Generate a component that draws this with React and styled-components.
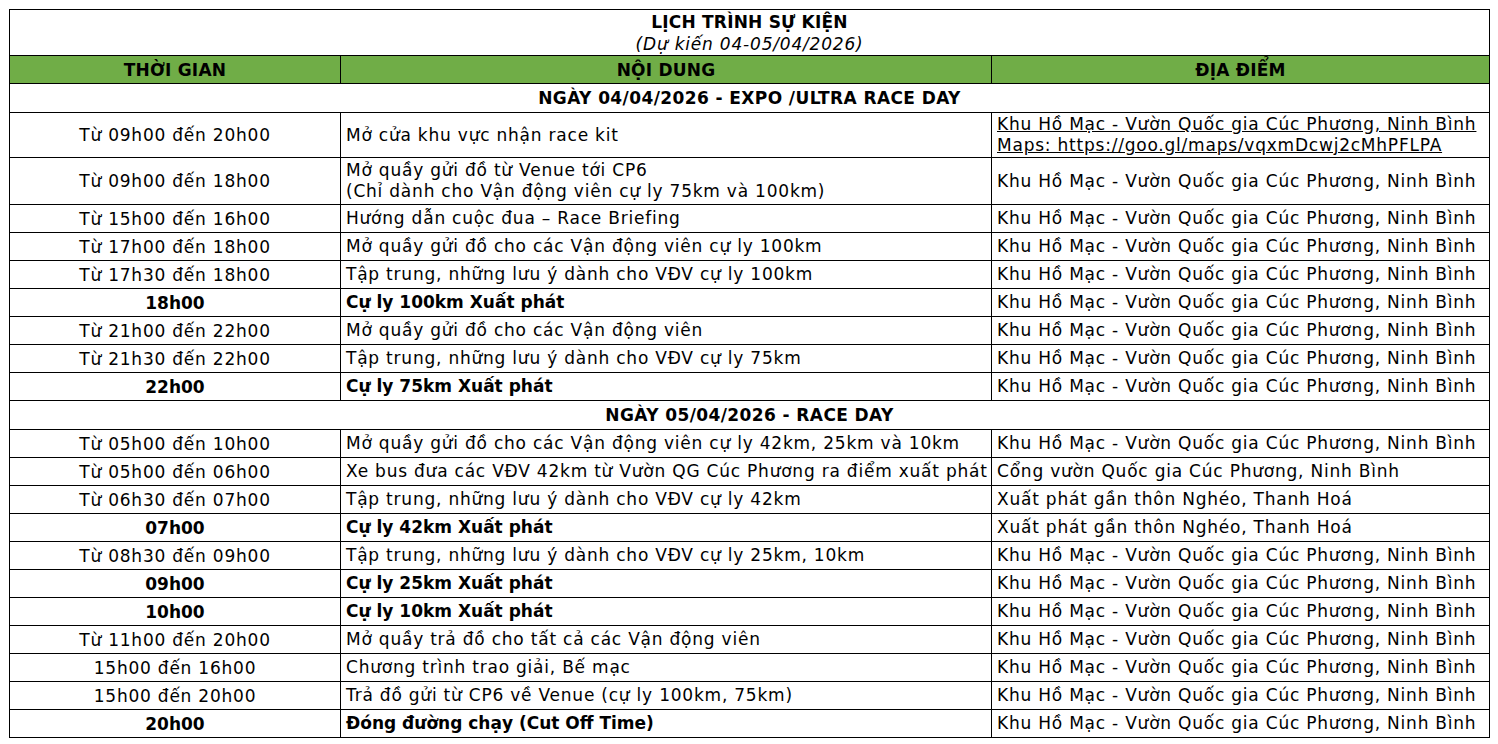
import React from "react";
import styled, { createGlobalStyle } from "styled-components";

const GlobalStyle = createGlobalStyle`
  body {
    margin: 0;
    padding: 9px 0 0 9px;
    background: #ffffff;
    font-family: "DejaVu Sans", "Noto Sans", sans-serif;
    color: #000;
  }
`;

const HOMAC = "Khu Hồ Mạc - Vườn Quốc gia Cúc Phương, Ninh Bình";
const NGHEO = "Xuất phát gần thôn Nghéo, Thanh Hoá";

const sections = [
  {
    title: "NGÀY 04/04/2026 - EXPO /ULTRA RACE DAY",
    rows: [
      {
        time: "Từ 09h00 đến 20h00",
        content: ["Mở cửa khu vực nhận race kit"],
        place: [HOMAC, "Maps: https://goo.gl/maps/vqxmDcwj2cMhPFLPA"],
        link: true,
        tall: 45,
      },
      {
        time: "Từ 09h00 đến 18h00",
        content: [
          "Mở quầy gửi đồ từ Venue tới CP6",
          "(Chỉ dành cho Vận động viên cự ly 75km và 100km)",
        ],
        place: [HOMAC],
        tall: 47,
      },
      { time: "Từ 15h00 đến 16h00", content: ["Hướng dẫn cuộc đua – Race Briefing"], place: [HOMAC] },
      { time: "Từ 17h00 đến 18h00", content: ["Mở quầy gửi đồ cho các Vận động viên cự ly 100km"], place: [HOMAC] },
      { time: "Từ 17h30 đến 18h00", content: ["Tập trung, những lưu ý dành cho VĐV cự ly 100km"], place: [HOMAC] },
      { time: "18h00", content: ["Cự ly 100km Xuất phát"], place: [HOMAC], bold: true },
      { time: "Từ 21h00 đến 22h00", content: ["Mở quầy gửi đồ cho các Vận động viên"], place: [HOMAC] },
      { time: "Từ 21h30 đến 22h00", content: ["Tập trung, những lưu ý dành cho VĐV cự ly 75km"], place: [HOMAC] },
      { time: "22h00", content: ["Cự ly 75km Xuất phát"], place: [HOMAC], bold: true },
    ],
  },
  {
    title: "NGÀY 05/04/2026 - RACE DAY",
    rows: [
      { time: "Từ 05h00 đến 10h00", content: ["Mở quầy gửi đồ cho các Vận động viên cự ly 42km, 25km và 10km"], place: [HOMAC] },
      {
        time: "Từ 05h00 đến 06h00",
        content: ["Xe bus đưa các VĐV 42km từ Vườn QG Cúc Phương ra điểm xuất phát"],
        place: ["Cổng vườn Quốc gia Cúc Phương, Ninh Bình"],
      },
      { time: "Từ 06h30 đến 07h00", content: ["Tập trung, những lưu ý dành cho VĐV cự ly 42km"], place: [NGHEO] },
      { time: "07h00", content: ["Cự ly 42km Xuất phát"], place: [NGHEO], bold: true },
      { time: "Từ 08h30 đến 09h00", content: ["Tập trung, những lưu ý dành cho VĐV cự ly 25km, 10km"], place: [HOMAC] },
      { time: "09h00", content: ["Cự ly 25km Xuất phát"], place: [HOMAC], bold: true },
      { time: "10h00", content: ["Cự ly 10km Xuất phát"], place: [HOMAC], bold: true },
      { time: "Từ 11h00 đến 20h00", content: ["Mở quầy trả đồ cho tất cả các Vận động viên"], place: [HOMAC] },
      { time: "15h00 đến 16h00", content: ["Chương trình trao giải, Bế mạc"], place: [HOMAC] },
      { time: "15h00 đến 20h00", content: ["Trả đồ gửi từ CP6 về Venue (cự ly 100km, 75km)"], place: [HOMAC] },
      { time: "20h00", content: ["Đóng đường chạy (Cut Off Time)"], place: [HOMAC], bold: true },
    ],
  },
];

export default function App() {
  return (
    <>
      <GlobalStyle />
      <Schedule>
        <colgroup>
          <col style={{ width: 331 }} />
          <col style={{ width: 651 }} />
          <col style={{ width: 498 }} />
        </colgroup>
        <tbody>
          <TitleRow>
            <TitleCell colSpan={3}>
              <Title>LỊCH TRÌNH SỰ KIỆN</Title>
              <Subtitle>(Dự kiến 04-05/04/2026)</Subtitle>
            </TitleCell>
          </TitleRow>
          <HeadRow>
            <HeadCell>THỜI GIAN</HeadCell>
            <HeadCell>NỘI DUNG</HeadCell>
            <HeadCell>ĐỊA ĐIỂM</HeadCell>
          </HeadRow>
          {sections.map((section) => (
            <React.Fragment key={section.title}>
              <DayRow>
                <DayCell colSpan={3}>{section.title}</DayCell>
              </DayRow>
              {section.rows.map((row, i) => (
                <Row key={i} $h={row.tall || 28}>
                  <TimeCell $bold={row.bold}>{row.time}</TimeCell>
                  <TextCell $bold={row.bold}>
                    {row.content.map((line) => (
                      <Line key={line}>{line}</Line>
                    ))}
                  </TextCell>
                  <TextCell $link={row.link}>
                    {row.place.map((line) => (
                      <Line key={line}>{line}</Line>
                    ))}
                  </TextCell>
                </Row>
              ))}
            </React.Fragment>
          ))}
        </tbody>
      </Schedule>
    </>
  );
}

const Schedule = styled.table`
  border-collapse: collapse;
  table-layout: fixed;
  width: 1480px;
  font-size: 17px;
  color: #000;
`;

const cellBorder = `
  border: 1px solid #000;
  padding: 0 5px;
  vertical-align: middle;
  white-space: nowrap;
  overflow: hidden;
`;

const regular = `
  font-weight: normal;
  letter-spacing: 0.78px;
`;

const strong = `
  font-weight: bold;
  letter-spacing: 0;
`;

const TitleRow = styled.tr`
  height: 46px;
`;

const TitleCell = styled.td`
  ${cellBorder}
  text-align: center;
  line-height: 22px;
`;

const Title = styled.div`
  ${strong}
  letter-spacing: 0.2px;
`;

const Subtitle = styled.div`
  ${regular}
  font-style: italic;
  letter-spacing: 0.8px;
`;

const HeadRow = styled.tr`
  height: 28px;
  background: #70ad47;
`;

const HeadCell = styled.td`
  ${cellBorder}
  ${strong}
  letter-spacing: 0.2px;
  text-align: center;
`;

const DayRow = styled.tr`
  height: 29px;
`;

const DayCell = styled.td`
  ${cellBorder}
  ${strong}
  letter-spacing: 0.4px;
  text-align: center;
`;

const Row = styled.tr`
  height: ${(p) => p.$h}px;
`;

const TimeCell = styled.td`
  ${cellBorder}
  ${(p) => (p.$bold ? strong : regular)}
  text-align: center;
`;

const TextCell = styled.td`
  ${cellBorder}
  ${(p) => (p.$bold ? strong : regular)}
  text-align: left;
  line-height: 21px;
  text-decoration: ${(p) => (p.$link ? "underline" : "none")};
`;

const Line = styled.div``;
